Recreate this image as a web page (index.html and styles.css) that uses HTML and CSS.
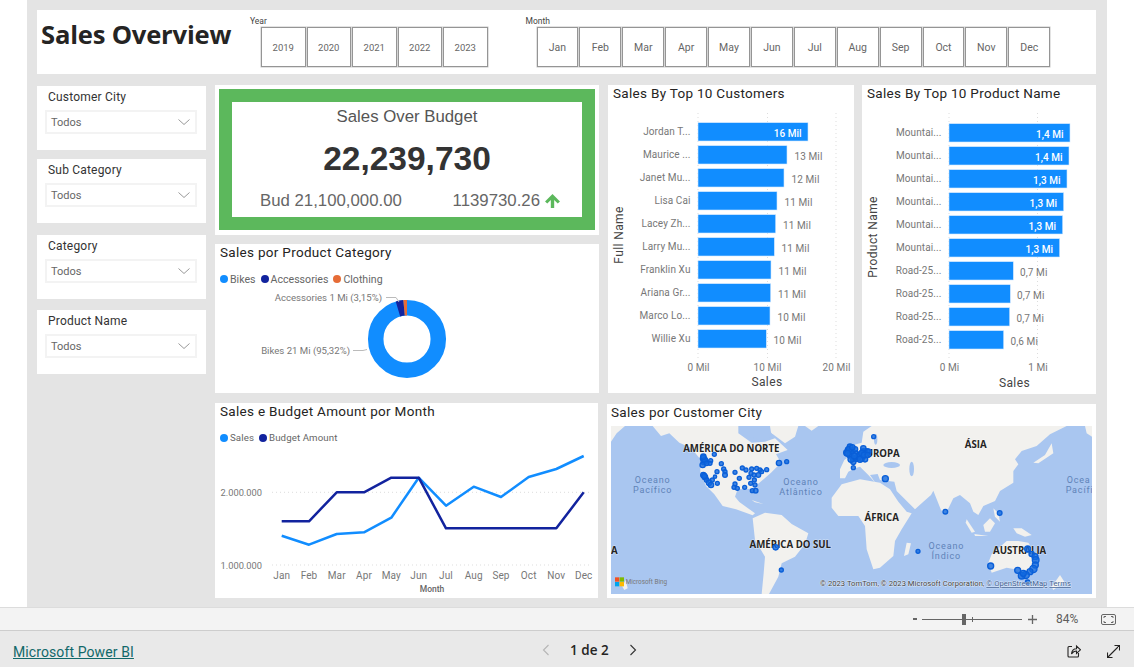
FILE: index.html
```html
<!DOCTYPE html>
<html lang="pt">
<head>
<meta charset="utf-8">
<title>Sales Overview</title>
<link rel="stylesheet" href="styles.css">
</head>
<body>
<main class="stage">
  <div class="canvas">
    <header class="head">
      <h1 class="head-title">Sales Overview</h1>
      <section class="tiles tiles-year">
        <div class="tiles-label">Year</div>
        <div class="tiles-row">
          <button class="tile tile-y">2019</button><button class="tile tile-y">2020</button><button class="tile tile-y">2021</button><button class="tile tile-y">2022</button><button class="tile tile-y">2023</button>
        </div>
      </section>
      <section class="tiles tiles-month">
        <div class="tiles-label">Month</div>
        <div class="tiles-row">
          <button class="tile tile-m">Jan</button><button class="tile tile-m">Feb</button><button class="tile tile-m">Mar</button><button class="tile tile-m">Apr</button><button class="tile tile-m">May</button><button class="tile tile-m">Jun</button><button class="tile tile-m">Jul</button><button class="tile tile-m">Aug</button><button class="tile tile-m">Sep</button><button class="tile tile-m">Oct</button><button class="tile tile-m">Nov</button><button class="tile tile-m">Dec</button>
        </div>
      </section>
    </header>

    <div class="board">
      <aside class="slicers">
        <div class="slicer"><div class="slicer-title">Customer City</div><div class="drop"><span>Todos</span><svg class="chev" viewBox="0 0 12 6"><path d="M.5.5 6 5.5 11.5.5"/></svg></div></div>
        <div class="slicer slicer-b"><div class="slicer-title">Sub Category</div><div class="drop"><span>Todos</span><svg class="chev" viewBox="0 0 12 6"><path d="M.5.5 6 5.5 11.5.5"/></svg></div></div>
        <div class="slicer slicer-c"><div class="slicer-title">Category</div><div class="drop"><span>Todos</span><svg class="chev" viewBox="0 0 12 6"><path d="M.5.5 6 5.5 11.5.5"/></svg></div></div>
        <div class="slicer slicer-d"><div class="slicer-title">Product Name</div><div class="drop"><span>Todos</span><svg class="chev" viewBox="0 0 12 6"><path d="M.5.5 6 5.5 11.5.5"/></svg></div></div>
      </aside>

      <div class="content">
        <div class="row row-top">
          <div class="stack">
            <section class="kpi">
              <div class="kpi-box">
                <div class="kpi-name">Sales Over Budget</div>
                <div class="kpi-value">22,239,730</div>
                <div class="kpi-foot">
                  <span>Bud 21,100,000.00</span>
                  <span class="kpi-delta">1139730.26<svg class="kpi-arrow" viewBox="0 0 16 15"><path d="M8 0 16 8 13.6 10.300 9.800 6.500V15H6.200V6.500L2.400 10.300 0 8Z"/></svg></span>
                </div>
              </div>
            </section>
            <section class="card card-donut">
              <h2 class="card-title">Sales por Product Category</h2>
              <div class="legend legend-donut">
                <span class="leg"><i class="dot dot-blue"></i>Bikes</span>
                <span class="leg"><i class="dot dot-navy"></i>Accessories</span>
                <span class="leg"><i class="dot dot-orange"></i>Clothing</span>
              </div>
              <svg class="chart" width="384" height="101" viewBox="215 292 384 101">
                <g fill="none" stroke-width="15.500" transform="rotate(-90 407 339)">
                  <circle cx="407" cy="339" r="31.300" stroke="#118dff"/>
                  <circle cx="407" cy="339" r="31.300" stroke="#12239e" pathLength="100" stroke-dasharray="3.150 100" stroke-dashoffset="-95.320"/>
                  <circle cx="407" cy="339" r="31.300" stroke="#e66c37" pathLength="100" stroke-dasharray="1.530 100" stroke-dashoffset="-98.470"/>
                </g>
                <path class="leader" d="M386 297.500H396L399 302M353 350.500H363L367 349.500"/>
                <text class="t-data" x="382" y="301" text-anchor="end">Accessories 1 Mi (3,15%)</text>
                <text class="t-data" x="350" y="354" text-anchor="end">Bikes 21 Mi (95,32%)</text>
              </svg>
            </section>
          </div>

          <section class="card card-cust">
            <h2 class="card-title">Sales By Top 10 Customers</h2>
            <svg class="chart" width="246" height="286" viewBox="608 107 246 286">
              <path class="grid" d="M698 113V358M767.500 113V358M836 113V358"/>
              <g class="bars">
                <rect x="698" y="122.700" width="110" height="18.300"/>
                <rect x="698" y="145.700" width="89" height="18.300"/>
                <rect x="698" y="168.700" width="86" height="18.300"/>
                <rect x="698" y="191.700" width="79" height="18.300"/>
                <rect x="698" y="214.700" width="77.700" height="18.300"/>
                <rect x="698" y="237.700" width="76.300" height="18.300"/>
                <rect x="698" y="260.700" width="73" height="18.300"/>
                <rect x="698" y="283.700" width="72.700" height="18.300"/>
                <rect x="698" y="306.700" width="72" height="18.300"/>
                <rect x="698" y="329.700" width="68.300" height="18.300"/>
              </g>
              <g class="t-cat" text-anchor="end">
                <text x="690.500" y="135">Jordan T...</text>
                <text x="690.500" y="158">Maurice ...</text>
                <text x="690.500" y="181">Janet Mu...</text>
                <text x="690.500" y="204">Lisa Cai</text>
                <text x="690.500" y="227">Lacey Zh...</text>
                <text x="690.500" y="250">Larry Mu...</text>
                <text x="690.500" y="273">Franklin Xu</text>
                <text x="690.500" y="296">Ariana Gr...</text>
                <text x="690.500" y="319">Marco Lo...</text>
                <text x="690.500" y="342">Willie Xu</text>
              </g>
              <text class="t-in" x="801.500" y="137" text-anchor="end">16 Mil</text>
              <g class="t-cat">
                <text x="794.500" y="160">13 Mil</text>
                <text x="791.500" y="183">12 Mil</text>
                <text x="784.500" y="206">11 Mil</text>
                <text x="783" y="229">11 Mil</text>
                <text x="781.500" y="252">11 Mil</text>
                <text x="778.500" y="275">11 Mil</text>
                <text x="778" y="298">11 Mil</text>
                <text x="777.500" y="321">10 Mil</text>
                <text x="773.500" y="344">10 Mil</text>
              </g>
              <g class="t-cat" text-anchor="middle">
                <text x="698.500" y="370.500">0 Mil</text>
                <text x="767.500" y="370.500">10 Mil</text>
                <text x="836.500" y="370.500">20 Mil</text>
              </g>
              <text class="t-axis" x="767" y="386" text-anchor="middle">Sales</text>
              <text class="t-axis" transform="translate(623 235) rotate(-90)" text-anchor="middle">Full Name</text>
            </svg>
          </section>

          <section class="card card-prod">
            <h2 class="card-title">Sales By Top 10 Product Name</h2>
            <svg class="chart" width="234" height="287" viewBox="862 107 234 287">
              <path class="grid" d="M949 113V358M1037.500 113V358"/>
              <g class="bars">
                <rect x="949" y="123.700" width="121" height="18.300"/>
                <rect x="949" y="146.700" width="120" height="18.300"/>
                <rect x="949" y="169.700" width="118" height="18.300"/>
                <rect x="949" y="192.700" width="114.700" height="18.300"/>
                <rect x="949" y="215.700" width="113.700" height="18.300"/>
                <rect x="949" y="238.700" width="110.700" height="18.300"/>
                <rect x="949" y="261.700" width="64.300" height="18.300"/>
                <rect x="949" y="284.700" width="61.300" height="18.300"/>
                <rect x="949" y="307.700" width="60.700" height="18.300"/>
                <rect x="949" y="330.700" width="54.700" height="18.300"/>
              </g>
              <g class="t-cat" text-anchor="end">
                <text x="941.500" y="136">Mountai...</text>
                <text x="941.500" y="159">Mountai...</text>
                <text x="941.500" y="182">Mountai...</text>
                <text x="941.500" y="205">Mountai...</text>
                <text x="941.500" y="228">Mountai...</text>
                <text x="941.500" y="251">Mountai...</text>
                <text x="941.500" y="274">Road-25...</text>
                <text x="941.500" y="297">Road-25...</text>
                <text x="941.500" y="320">Road-25...</text>
                <text x="941.500" y="343">Road-25...</text>
              </g>
              <g class="t-in" text-anchor="end">
                <text x="1063.500" y="138">1,4 Mi</text>
                <text x="1062.500" y="161">1,4 Mi</text>
                <text x="1060.500" y="184">1,3 Mi</text>
                <text x="1057" y="207">1,3 Mi</text>
                <text x="1056" y="230">1,3 Mi</text>
                <text x="1053" y="253">1,3 Mi</text>
              </g>
              <g class="t-cat">
                <text x="1020" y="276">0,7 Mi</text>
                <text x="1017" y="299">0,7 Mi</text>
                <text x="1016.500" y="322">0,7 Mi</text>
                <text x="1010.500" y="345">0,6 Mi</text>
              </g>
              <g class="t-cat" text-anchor="middle">
                <text x="949.500" y="371">0 Mi</text>
                <text x="1038" y="371">1 Mi</text>
              </g>
              <text class="t-axis" x="1014.500" y="387" text-anchor="middle">Sales</text>
              <text class="t-axis" transform="translate(877 237) rotate(-90)" text-anchor="middle">Product Name</text>
            </svg>
          </section>
        </div>

        <div class="row row-bottom">
          <section class="card card-line">
            <h2 class="card-title">Sales e Budget Amount por Month</h2>
            <div class="legend legend-line">
              <span class="leg"><i class="dot dot-blue"></i>Sales</span>
              <span class="leg"><i class="dot dot-navy"></i>Budget Amount</span>
            </div>
            <svg class="chart" width="383" height="148" viewBox="215 450 383 148">
              <path class="grid" d="M272 492.300H591M272 565H591"/>
              <polyline class="ln ln-blue" points="281.700,535.700 309,544.700 336.700,534 364,532.300 391.300,517.700 418.700,477.700 446,505.700 473.700,486.700 501,497 528.700,477 556.300,469 583.700,456"/>
              <polyline class="ln ln-navy" points="281.700,521.300 309,521.300 336.700,492.300 364,492.300 391.300,477.700 418.700,477.700 446,528.300 473.700,528.300 501,528.300 528.700,528.300 556.300,528.300 583.700,492.300"/>
              <g class="t-val" text-anchor="end">
                <text x="262" y="496">2.000.000</text>
                <text x="262" y="569">1.000.000</text>
              </g>
              <g class="t-tick" text-anchor="middle">
                <text x="281.700" y="579">Jan</text><text x="309" y="579">Feb</text><text x="336.700" y="579">Mar</text><text x="364" y="579">Apr</text><text x="391.300" y="579">May</text><text x="418.700" y="579">Jun</text><text x="446" y="579">Jul</text><text x="473.700" y="579">Aug</text><text x="501" y="579">Sep</text><text x="528.700" y="579">Oct</text><text x="556.300" y="579">Nov</text><text x="583.700" y="579">Dec</text>
              </g>
              <text class="t-small" x="432" y="592" text-anchor="middle">Month</text>
            </svg>
          </section>

          <section class="card card-map">
            <h2 class="card-title">Sales por Customer City</h2>
            <svg class="map" width="481" height="168" viewBox="18 78 1443 504">
              <rect class="sea" x="18" y="78" width="1443" height="504"/>
              <g class="land">
                <path d="M143 78 168 108 193 100 223 128 258 143 286 178 286 223 303 258 328 283 353 318 393 328 443 346 450 340 403 306 390 290 398 268 438 266 453 283 458 253 498 218 528 188 513 163 548 150 510 115 480 125 440 128 400 100 400 78Z"/>
                <path d="M480 78 500 100 540 130 570 110 580 78Z"/>
                <path d="M18 78H60L35 100 18 125Z"/>
                <path d="M600 78H640L620 92Z"/>
                <path d="M440 300 475 312 450 307Z"/>
                <path d="M443 355 480 338 530 345 560 372 610 400 600 432 570 470 530 490 520 530 492 582H470L476 520 480 470 450 420Z"/>
                <path d="M680 293 710 253 765 238 825 248 855 268 880 305 905 335 920 340 890 388 870 423 865 468 825 503 805 508 785 448 780 378 760 348 700 348 680 323Z"/>
                <path d="M897 468 905 428 918 430 910 463Z"/>
                <path d="M705 208 718 180 730 172 722 150 745 135 770 128 775 95 800 78H1385L1335 103 1295 138 1250 153 1230 178 1240 193 1225 213 1225 248 1185 273 1170 303 1135 318 1120 345 1105 335 1095 310 1065 285 1045 295 1022 342 1008 330 985 272 978 285 955 305 930 328 875 273 868 245 825 240 818 222 795 225 812 250 790 225 765 200 750 205 730 215 720 235 705 235Z"/>
                <path d="M1440 78H1461V110L1445 100Z"/>
                <path d="M1340 130 1345 160 1300 190 1285 188 1320 165Z"/>
                <path d="M1165 325 1180 340 1185 365 1170 350Z"/>
                <path d="M1135 375 1155 355 1170 370 1155 395 1140 395Z"/>
                <path d="M1085 358 1110 395 1100 398 1082 368Z"/>
                <path d="M1108 402 1150 408 1110 408Z"/>
                <path d="M1225 385 1250 385 1280 405 1260 410 1235 400Z"/>
                <path d="M1160 463 1205 423 1240 423 1270 428 1290 458 1300 488 1285 518 1260 533 1230 508 1205 503 1160 518 1150 488Z"/>
                <path d="M1258 548 1275 548 1268 560Z"/>
                <path d="M1365 525 1378 545 1345 570 1340 560Z"/>
                <path d="M52 560 62 540 68 565 58 570Z"/>
              </g>
              <g class="sea-shape">
                <ellipse cx="860" cy="195" rx="25" ry="9"/>
                <ellipse cx="920" cy="207" rx="7" ry="22"/>
                <ellipse cx="812" cy="118" rx="5" ry="16"/>
                <path d="M430 78H495L500 110 470 122 435 110Z"/>
              </g>
              <g class="m-ocean" text-anchor="middle">
                <text x="143" y="249">Oceano</text><text x="143" y="279">Pacífico</text>
                <text x="588" y="254">Oceano</text><text x="588" y="284">Atlântico</text>
                <text x="1024" y="446">Oceano</text><text x="1024" y="476">Índico</text>
              </g>
              <g class="m-ocean">
                <text x="1385" y="249">Ocea</text><text x="1382" y="279">Pacífi</text>
              </g>
              <g class="m-label" text-anchor="middle">
                <text x="379" y="155">AMÉRICA DO NORTE</text>
                <text x="825" y="170">EUROPA</text>
                <text x="1112" y="145">ÁSIA</text>
                <text x="830" y="362">ÁFRICA</text>
                <text x="556" y="443">AMÉRICA DO SUL</text>
                <text x="1244" y="463">AUSTRALIA</text>
              </g>
              <text class="m-label" x="18" y="463">A</text>
              <g class="pins">
                <circle cx="295" cy="175" r="9"/><circle cx="297" cy="185" r="9"/><circle cx="293" cy="195" r="8"/><circle cx="300" cy="180" r="8"/><circle cx="295" cy="170" r="8"/><circle cx="305" cy="190" r="7"/><circle cx="317" cy="182" r="6"/><circle cx="328" cy="163" r="6"/><circle cx="315" cy="190" r="6"/>
                <circle cx="295" cy="225" r="8"/><circle cx="300" cy="232" r="8"/><circle cx="305" cy="240" r="7"/><circle cx="312" cy="248" r="8"/><circle cx="318" cy="255" r="8"/><circle cx="322" cy="240" r="6"/><circle cx="330" cy="230" r="5"/><circle cx="336" cy="215" r="6"/><circle cx="337" cy="250" r="6"/><circle cx="298" cy="228" r="8"/>
                <circle cx="349" cy="191" r="6"/><circle cx="356" cy="207" r="6"/><circle cx="360" cy="215" r="6"/><circle cx="360" cy="225" r="7"/><circle cx="390" cy="217" r="6"/><circle cx="403" cy="235" r="6"/><circle cx="412" cy="204" r="6"/><circle cx="423" cy="210" r="6"/><circle cx="440" cy="207" r="6"/><circle cx="455" cy="205" r="6"/><circle cx="465" cy="210" r="6"/><circle cx="470" cy="215" r="6"/><circle cx="485" cy="209" r="6"/><circle cx="460" cy="225" r="7"/><circle cx="438" cy="220" r="6"/><circle cx="432" cy="232" r="6"/><circle cx="447" cy="225" r="6"/><circle cx="448" cy="240" r="6"/><circle cx="437" cy="250" r="6"/><circle cx="450" cy="255" r="6"/><circle cx="390" cy="252" r="6"/><circle cx="387" cy="262" r="6"/><circle cx="397" cy="265" r="6"/><circle cx="419" cy="262" r="6"/><circle cx="442" cy="272" r="6"/><circle cx="452" cy="272" r="7"/><circle cx="522" cy="189" r="8"/><circle cx="545" cy="185" r="6"/>
                <circle cx="735" cy="140" r="8"/><circle cx="730" cy="150" r="9"/><circle cx="725" cy="158" r="9"/><circle cx="735" cy="165" r="9"/><circle cx="745" cy="175" r="9"/><circle cx="750" cy="160" r="9"/><circle cx="740" cy="152" r="9"/><circle cx="745" cy="185" r="8"/><circle cx="755" cy="175" r="9"/><circle cx="770" cy="175" r="9"/><circle cx="765" cy="165" r="9"/><circle cx="775" cy="155" r="9"/><circle cx="785" cy="155" r="9"/><circle cx="775" cy="145" r="8"/><circle cx="790" cy="155" r="8"/><circle cx="780" cy="178" r="8"/><circle cx="760" cy="170" r="9"/><circle cx="732" cy="148" r="9"/><circle cx="750" cy="148" r="8"/><circle cx="770" cy="160" r="9"/><circle cx="728" cy="160" r="9"/><circle cx="738" cy="178" r="9"/><circle cx="748" cy="168" r="9"/><circle cx="742" cy="142" r="8"/><circle cx="765" cy="178" r="9"/><circle cx="778" cy="165" r="9"/><circle cx="788" cy="165" r="8"/>
                <circle cx="745" cy="203" r="6"/><circle cx="806" cy="110" r="6"/><circle cx="841" cy="236" r="9"/><circle cx="1021" cy="335" r="7"/><circle cx="1184" cy="339" r="7"/><circle cx="939" cy="454" r="6"/><circle cx="512" cy="442" r="8"/><circle cx="529" cy="510" r="6"/><circle cx="1157" cy="498" r="9"/>
                <circle cx="1268" cy="447" r="9"/><circle cx="1280" cy="462" r="8"/><circle cx="1290" cy="470" r="9"/><circle cx="1292" cy="480" r="10"/><circle cx="1291" cy="495" r="9"/><circle cx="1285" cy="507" r="11"/><circle cx="1275" cy="515" r="9"/><circle cx="1238" cy="511" r="9"/><circle cx="1262" cy="525" r="11"/><circle cx="1250" cy="527" r="10"/><circle cx="1255" cy="520" r="9"/><circle cx="1268" cy="547" r="7"/>
              </g>
              <rect x="30" y="532" width="13" height="13" fill="#f25022"/>
              <rect x="44" y="532" width="13" height="13" fill="#7fba00"/>
              <rect x="30" y="546" width="13" height="13" fill="#00a4ef"/>
              <rect x="44" y="546" width="13" height="13" fill="#ffb900"/>
              <text class="m-bing" x="62" y="551">Microsoft Bing</text>
              <text class="m-copy" x="645" y="558">© 2023 TomTom, © 2023 Microsoft Corporation, <tspan class="m-link">© OpenStreetMap</tspan>   <tspan class="m-link">Terms</tspan></text>
            </svg>
          </section>
        </div>
      </div>
    </div>
  </div>
</main>

<div class="zoombar">
  <span class="zb-minus"></span>
  <div class="zb-track"><span class="zb-tick"></span><span class="zb-thumb"></span></div>
  <svg class="zb-plus" width="9" height="9" viewBox="0 0 9 9"><path d="M4.500 0V9M0 4.500H9"/></svg>
  <span class="zb-pct">84%</span>
  <svg class="zb-fit" width="15" height="11" viewBox="0 0 15 11"><rect x=".5" y=".5" width="14" height="10" rx="1.500"/><path d="M3 4V2.500H5M10 2.500H12V4M12 7V8.500H10M5 8.500H3V7"/></svg>
</div>

<footer class="foot">
  <a class="foot-link" href="#">Microsoft Power BI</a>
  <nav class="pager">
    <svg class="pg-arrow pg-off" width="8" height="12" viewBox="0 0 8 12"><path d="M6.500 1 1.500 6 6.500 11"/></svg>
    <span class="pg-text">1 de 2</span>
    <svg class="pg-arrow" width="8" height="12" viewBox="0 0 8 12"><path d="M1.500 1 6.500 6 1.500 11"/></svg>
  </nav>
  <div class="foot-icons">
    <svg class="fi" width="14" height="14" viewBox="0 0 14 14"><path d="M5 2.500H2A1 1 0 0 0 1 3.500V12A1 1 0 0 0 2 13H10.500A1 1 0 0 0 11.500 12V9"/><path d="M4.500 10C4.800 6.500 6.800 4.800 9.500 4.800V2L13.500 5.800 9.500 9.500V7C7.500 7 5.800 8 4.500 10Z"/></svg>
    <svg class="fi fi-exp" width="13" height="13" viewBox="0 0 13 13"><path d="M.5 12.500 12.500 .5M7.500 .5H12.500V5.500M.5 7.500V12.500H5.500"/></svg>
  </div>
</footer>
</body>
</html>
```

FILE: styles.css
```css
* { box-sizing: border-box; }
html, body { margin: 0; padding: 0; }
body {
  width: 1134px;
  height: 667px;
  overflow: hidden;
  background: #fff;
  display: flex;
  flex-direction: column;
  font-family: Roboto, "Liberation Sans", sans-serif;
  color: #252423;
}
.stage { height: 608px; flex: none; border-bottom: 1px solid #dcdcdc; }
.canvas {
  width: 1080px;
  height: 607px;
  margin-left: 27px;
  background: #e4e4e4;
  padding: 10px 11px 0 10px;
}

/* header */
.head {
  height: 64px;
  background: #fff;
  display: flex;
  align-items: flex-start;
}
.head-title {
  margin: 7px 0 0 4px;
  width: 209px;
  flex: none;
  font: 700 25.600px/36px "Open Sans", sans-serif;
  letter-spacing: -.2px;
  color: #252423;
}
.tiles { padding-top: 5px; }
.tiles-month { margin-left: 38px; }
.tiles-label { font-size: 8.500px; line-height: 12px; color: #444; }
.tiles-row { display: flex; gap: 1px; padding-left: 11px; }
.tile {
  height: 40px;
  padding: 0;
  background: #fff;
  border: 1px solid #959595;
  box-shadow: 0 0 0 .5px #c8c8c8;
  font-family: inherit;
  color: #666;
}
.tile-y { width: 44.500px; font-size: 9.500px; }
.tile-m { width: 41.900px; font-size: 10.500px; }

/* layout */
.board { display: flex; margin-top: 11px; }
.slicers { width: 169px; flex: none; padding-top: 1px; }
.slicer { height: 64px; background: #fff; padding: 4px 9px 0 8px; }
.slicer-b { margin-top: 9px; }
.slicer-c { margin-top: 12px; }
.slicer-d { margin-top: 11px; }
.slicer-title { font-size: 12px; line-height: 14px; letter-spacing: .2px; color: #333; padding: 0 3px; }
.drop {
  margin-top: 6px;
  height: 24px;
  border: 2px solid #f3f3f3;
  display: flex;
  align-items: center;
  justify-content: space-between;
  padding: 0 5px 0 4px;
  font-size: 11px;
  color: #666;
}
.chev { width: 12px; height: 6px; fill: none; stroke: #999; stroke-width: 1; }

.content { width: 881px; margin-left: 9px; flex: none; }
.row { display: flex; align-items: flex-start; }
.row-top { height: 309px; }
.row-bottom { margin-top: 9px; }
.stack { width: 384px; flex: none; display: flex; flex-direction: column; }

.card { background: #fff; }
.card-title {
  margin: 0;
  padding-left: 5px;
  font-size: 13.500px;
  font-weight: 400;
  line-height: 16px;
  height: 22px;
  letter-spacing: .3px;
  color: #252423;
}
.chart, .map { display: block; }

/* kpi */
.kpi { height: 150px; background: #fff; padding: 4px 4px 5px; }
.kpi-box {
  height: 141px;
  border: 13px solid #5cb85c;
  text-align: center;
  font-family: "Liberation Sans", Arial, sans-serif;
  color: #444;
}
.kpi-name { font-size: 16.800px; line-height: 24px; margin-top: 3px; color: #555; }
.kpi-value { font-size: 33.500px; font-weight: 700; line-height: 40px; margin-top: 10px; color: #333; }
.kpi-foot {
  display: flex;
  justify-content: space-between;
  align-items: center;
  margin-top: 10px;
  padding: 0 22px 0 28px;
  font-size: 16.800px;
  line-height: 24px;
  color: #666;
}
.kpi-delta { display: flex; align-items: center; gap: 5px; }
.kpi-arrow { width: 15px; height: 14px; fill: #5cb85c; }

/* donut + legends */
.card-donut { height: 149px; margin-top: 9px; }
.legend { display: flex; padding-left: 5px; color: #666; }
.legend-donut { height: 26px; gap: 5px; font-size: 10.600px; align-items: center; }
.legend-line { height: 25px; gap: 5px; font-size: 9.700px; align-items: center; letter-spacing: .1px; }
.leg { display: flex; align-items: center; gap: 2px; }
.dot { width: 8px; height: 8px; border-radius: 50%; display: block; }
.dot-blue { background: #118dff; }
.dot-navy { background: #12239e; }
.dot-orange { background: #e66c37; }

.leader { fill: none; stroke: #bbb; stroke-width: 1; }
.t-cat, .t-tick { font-size: 10px; fill: #777; }
.t-data { font-size: 9.600px; fill: #777; }
.t-val { font-size: 9.300px; fill: #777; }
.t-cat text, .t-tick text { letter-spacing: .1px; }
.t-in { font-size: 10px; fill: #fff; font-weight: 500; }
.t-axis { font-size: 12px; fill: #444; letter-spacing: .4px; }
.t-small { font-size: 8.500px; fill: #666; font-weight: 500; }
.grid { fill: none; stroke: #ddd; stroke-width: 1; stroke-dasharray: 1 3; }
.bars rect { fill: #118dff; stroke: #cfe6ff; stroke-width: .6; }

/* cards */
.card-cust { width: 246px; height: 308px; margin-left: 9px; flex: none; }
.card-prod { width: 234px; height: 309px; margin-left: 8px; flex: none; }
.card-line { width: 383px; height: 195px; flex: none; }
.card-map { width: 489px; height: 194px; margin: 1px 0 0 9px; flex: none; padding: 0 4px; }
.card-map .card-title { padding-left: 0; }
.ln { fill: none; stroke-width: 2.500; stroke-linejoin: round; }
.ln-blue { stroke: #118dff; }
.ln-navy { stroke: #12239e; }

/* map */
.sea, .sea-shape { fill: #a9c6f0; }
.land { fill: #f2f1ee; filter: blur(.5px); }
.m-ocean { font-size: 27px; fill: #5f83b8; letter-spacing: 2.500px; }
.m-label { font: 700 29px "Open Sans", sans-serif; fill: #252423; paint-order: stroke; stroke: #fff; stroke-width: 3; stroke-opacity: .5; }
.pins circle { fill: #1269de; fill-opacity: .8; stroke: #0a5fd8; stroke-width: 4; }
.m-bing { font-size: 19px; fill: #777; }
.m-copy { font-size: 23px; fill: #444; paint-order: stroke; stroke: #fff; stroke-width: 3; stroke-opacity: .6; }
.m-link { text-decoration: underline; fill: #3f5f92; }

/* bottom */
.zoombar {
  height: 22px;
  flex: none;
  background: #f3f3f3;
  border-bottom: 1px solid #cdcdcd;
  display: flex;
  align-items: center;
  padding-left: 913px;
  box-sizing: content-box;
}
.zb-minus { width: 4px; height: 2px; background: #666; }
.zb-track { width: 100px; height: 1px; margin-left: 5px; background: #666; position: relative; }
.zb-tick { position: absolute; left: 50px; top: -2px; width: 1px; height: 5px; background: #666; }
.zb-thumb { position: absolute; left: 40px; top: -5px; width: 4px; height: 11px; background: #666; }
.zb-plus { margin-left: 6px; fill: none; stroke: #666; stroke-width: 1.300; }
.zb-pct { margin-left: 19px; font-size: 12px; color: #605e5c; width: 26px; }
.zb-fit { margin-left: 19px; fill: none; stroke: #666; stroke-width: 1; }

.foot {
  flex: 1;
  background: #e9e9e9;
  display: flex;
  align-items: center;
  position: relative;
  padding: 4px 14px 0 13px;
}
.foot-link { font-size: 14px; color: #11686a; letter-spacing: .1px; width: 529px; margin-top: 1px; }
.pager { display: flex; align-items: center; margin-top: -2px; }
.pg-arrow { fill: none; stroke: #333; stroke-width: 1.100; }
.pg-off { stroke: #b5b5b5; }
.pg-text { margin: 0 20px; font: 600 13.500px "Open Sans", sans-serif; color: #252423; }
.foot-icons { margin-left: auto; display: flex; align-items: center; gap: 26px; }
.fi { fill: none; stroke: #252423; stroke-width: 1.100; }
```
